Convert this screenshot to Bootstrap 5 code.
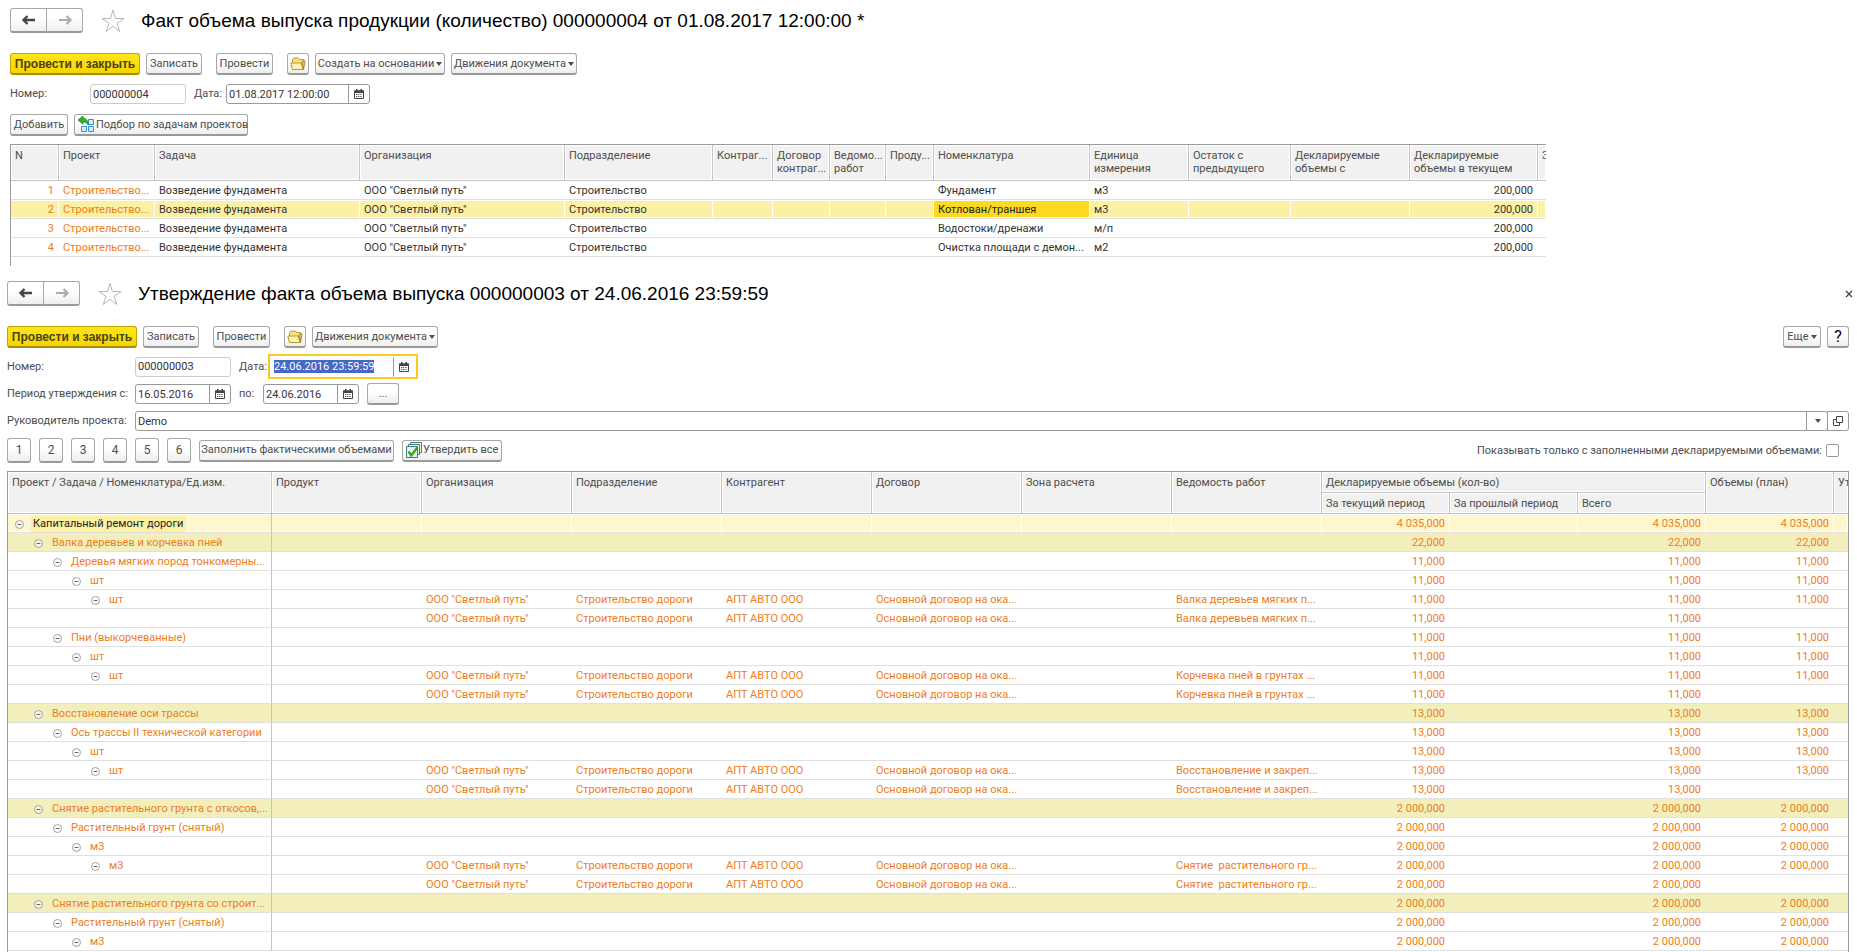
<!DOCTYPE html>
<html lang="ru">
<head>
<meta charset="utf-8">
<meta name="viewport" content="width=device-width, initial-scale=1">
<title>Утверждение факта объема выпуска</title>
<link href="https://cdn.jsdelivr.net/npm/bootstrap@5.3.0/dist/css/bootstrap.min.css" rel="stylesheet">
<style>
  html, body { height: 100%; }
  body { font: 11px/14px Roboto, "Liberation Sans", sans-serif; color: #4d4d4d; background: #fff; overflow: hidden; }
  svg { display: block; flex: none; }
  h1 { font: 19px/24px "Liberation Sans", Arial, sans-serif; color: #000; margin: 0; white-space: nowrap; }
  .btn { --bs-btn-padding-x: 3px; --bs-btn-padding-y: 0; --bs-btn-font-size: 11px; --bs-btn-line-height: 14px; --bs-btn-border-radius: 3px;
    --bs-btn-color: #4d4d4d; --bs-btn-border-color: #a8a8a8; --bs-btn-hover-color: #222; --bs-btn-hover-border-color: #888;
    height: 22px; border-bottom: 2px solid #999; background: linear-gradient(#fff 40%, #eee); white-space: nowrap; display: inline-flex; align-items: center; justify-content: center; }
  .btn.main { --bs-btn-border-color: #c2a500; --bs-btn-color: #4a4417; background: linear-gradient(#ffe61a, #f5d500); border-bottom-color: #a88f00; font: bold 12px/14px "Liberation Sans", sans-serif; width: 130px; }
  .btn.dropdown-toggle::after { border-width: 4px 3px 0; margin-left: 2px; vertical-align: 0; }
  .w-save { width: 56px; } .w-post { width: 57px; } .w-sq { width: 22px; }
  .w-base { width: 130px; } .w-moves { width: 126px; } .w-add { width: 58px; } .w-pick { width: 174px; }
  .w-fill { width: 195px; } .w-approve { width: 100px; } .w-more { width: 38px; } .w-dots { width: 32px; }
  .btn.w-pick, .btn.w-approve { gap: 1px; justify-content: flex-start; }
  .btn.num { width: 24px; height: 25px; font-size: 12px; }
  .history .btn { width: 37px; height: 25px; }
  .bar { gap: 6px; }
  .after-save { margin-left: 8px; }
  .star { margin: 0 16px 0 18px; }
  .form-control { font: 11px/14px Roboto, sans-serif; color: #333; padding: 0 2px; height: 20px; min-height: 20px; border-color: #999; border-radius: 3px; }
  .form-control[readonly] { border-color: #ccc; }
  .w-number { width: 96px; }
  .input-group { height: 20px; flex-wrap: nowrap; }
  .input-group .btn { height: 20px; width: 22px; padding: 0; background: #fff; border: 1px solid #999; }
  .g-date { width: 144px; } .g-day { width: 96px; }
  .focused { height: 25px; width: 150px; border: 2px solid #fbc91f; padding: 1px; background: #fff; align-items: center; }
  .focused .form-control, .focused .btn { border-color: transparent; box-shadow: none; }
  .focused .btn { border-left-color: #999; }
  .form-control::selection { background: #4667c5; color: #fff; }
  .lbl-a { width: 80px; } .lbl-b { width: 128px; } .lbl-to { width: 24px; } .lbl-date { width: 29px; }
  .form-check-input.flag { width: 13px; height: 13px; margin: 0 10px 0 0; border: 1px solid #999; border-radius: 2px; }
  .panel-a { padding: 8px 8px 0 10px; }
  .panel-b { padding: 15px 8px 0 7px; min-height: 0; }
  .gap-t4 { margin-top: 4px; } .gap-t6 { margin-top: 6px; } .gap-t7 { margin-top: 7px; } .gap-t9 { margin-top: 9px; } .gap-t10 { margin-top: 10px; } .gap-t20 { margin-top: 20px; }
  .frame { border: 1px solid #999; border-right: 0; border-bottom: 0; overflow: hidden; margin-top: 8px; }
  .frame-a { max-width: 1536px; height: 122px; }
  .frame-b { border-right: 1px solid #999; }
  .grid { table-layout: fixed; width: 100%; border-collapse: separate; border-spacing: 0; margin: 0; }
  .grid th { font-weight: 400; vertical-align: top; background: #f1f1f1; border-right: 1px solid #c4c4c4; border-bottom: 1px solid #c4c4c4; box-shadow: inset 0 0 0 1px #fff; padding: 4px 0 0 4px; line-height: 13px; overflow: hidden; white-space: nowrap; }
  .grid th:last-child { border-right: 0; }
  .grid th.sub-last { border-right: 1px solid #c4c4c4; }
  .frame-a th { height: 36px; }
  .frame-b th { height: 21px; }
  .grid td { height: 19px; padding: 2px 5px 0 4px; line-height: 16px; border-bottom: 1px solid #e0e0e0; overflow: hidden; white-space: nowrap; color: #333; }
  .grid .num-cell { text-align: right; }
  .grid .orange, .tree td { color: #ee7d1b; }
  .grid tr.current td { background: #fcf0a4; border-right: 1px solid #fff; box-shadow: inset 0 1px #fff, inset 0 -1px #fff; }
  .grid tr.current td.cell-on { background: #fcda20; color: #222; }
  .grid tr.current .num-cell { padding-right: 4px; }
  .tree td:first-child { border-right: 1px solid #c4c4c4; padding-left: calc(7px + 19px * var(--level, 0)); padding-right: 2px; }
  .tree tr.root td { background: #fdf6cf; border-right: 1px solid #fff; box-shadow: inset 0 1px #fff, inset 0 -1px #fff; }
  .tree tr.root td:first-child { border-right-color: #c4c4c4; }
  .tree tr.root .num-cell { padding-right: 4px; }
  .tree tr.task td { background: #f3efbd; }
  .lv1 { --level: 1; } .lv2 { --level: 2; } .lv3 { --level: 3; } .lv4 { --level: 4; }
  .node { gap: 7px; }
  .node span { padding: 0 2px; }
  .root .node span { background: #fcf0a4; color: #222; padding-right: 3px; }
  .close-x { color: #4d4d4d; background: none; border: 0; padding: 0; margin-right: -4px; }
</style>
</head>
<body class="d-flex flex-column">

<svg width="0" height="0" class="position-absolute" aria-hidden="true">
  <symbol id="i-back" viewBox="0 0 16 12"><path d="M6.500 2 2.500 6l4 4M3 6h11" fill="none" stroke="#444" stroke-width="2.400"/></symbol>
  <symbol id="i-next" viewBox="0 0 16 12"><path d="M9.500 2l4 4-4 4M13 6H2" fill="none" stroke="#aaa" stroke-width="2.200"/></symbol>
  <symbol id="i-star" viewBox="0 0 24 24"><path d="M12 1l2.400 8.500H23l-7 4.800 2.800 8.200L12 17.200l-6.800 5.300L8 14.300 1 9.500h8.600z" fill="#fff" stroke="#b4b9c0"/></symbol>
  <symbol id="i-folder" viewBox="0 0 16 14"><path d="M2.500 6V2.500L4 1h4l1.500 1.500h4V12" fill="#f7e08a" stroke="#b9982c"/><path d="M2.500 12.500.8 6h10.400l2 6.500z" fill="#fdf3b8" stroke="#b9982c"/><path d="M11.500 5.500 14 3l1 1.500-1.500 8z" fill="#d9b648" stroke="#9c7c1c" stroke-width=".8"/></symbol>
  <symbol id="i-cal" viewBox="0 0 10 10"><path d="M.5 2h9v7.500h-9z" fill="#fff" stroke="#444"/><path d="M0 1.500h10V4H0zM2 0h1.500v2H2zM6.500 0H8v2H6.500z" fill="#444"/><path d="M2 5.500h6M2 7.500h6" stroke="#444" stroke-dasharray="1.200 1"/></symbol>
  <symbol id="i-pick" viewBox="0 0 17 17"><g fill="#d5ecfb" stroke="#3592dc"><path d="M10.500 3.500h5v5h-5zM3.500 10.500h5v5h-5zM10.500 10.500h5v5h-5z"/></g><path d="M0 4 5 0v2.200c3 0 5 2 5.500 7C8.500 6.500 7 6 5 6v2.200z" fill="#2bb32b" stroke="#14801a" stroke-width=".7"/></symbol>
  <symbol id="i-ok" viewBox="0 0 16 16"><g fill="#e9f3ee" stroke="#4a7a80"><path d="M4.500.5h11v10h-11z"/><path d="M2.500 2.500h11v10h-11z"/><path d="M.5 4.500h11v11H.5z"/></g><path d="M2.500 9.500l2.800 4 6-8" fill="none" stroke="#35a81e" stroke-width="2.400"/></symbol>
  <symbol id="i-open" viewBox="0 0 10 10"><path d="M3.500.5h6v6h-6zM3 3.500H.5v6h6V7" fill="none" stroke="#444"/></symbol>
  <symbol id="i-minus" viewBox="0 0 9 9"><circle cx="4.500" cy="4.500" r="4" fill="#fff" fill-opacity=".6" stroke="#a0a0a0"/><path d="M2.500 4.500h4" stroke="#666"/></symbol>
  <symbol id="i-x" viewBox="0 0 8 8"><path d="M1 1l6 6M7 1 1 7" stroke="#444" stroke-width="1.300"/></symbol>
</svg>

<section class="panel-a flex-shrink-0">
  <div class="d-flex align-items-center">
    <div class="btn-group history" role="group">
      <button type="button" class="btn" aria-label="Назад"><svg width="16" height="12"><use href="#i-back"/></svg></button>
      <button type="button" class="btn" aria-label="Вперед"><svg width="16" height="12"><use href="#i-next"/></svg></button>
    </div>
    <svg class="star" width="24" height="24"><use href="#i-star"/></svg>
    <h1>Факт объема выпуска продукции (количество) 000000004 от 01.08.2017 12:00:00 *</h1>
  </div>
  <div class="d-flex bar gap-t20">
    <button type="button" class="btn main">Провести и закрыть</button>
    <button type="button" class="btn w-save">Записать</button>
    <button type="button" class="btn w-post after-save">Провести</button>
    <button type="button" class="btn w-sq after-save" aria-label="Открыть папку"><svg width="16" height="14"><use href="#i-folder"/></svg></button>
    <button type="button" class="btn w-base dropdown-toggle">Создать на основании</button>
    <button type="button" class="btn w-moves dropdown-toggle">Движения документа</button>
  </div>
  <div class="d-flex align-items-center gap-t9">
    <label class="lbl-a" for="numA">Номер:</label>
    <input id="numA" class="form-control w-number" readonly value="000000004">
    <label class="ms-2 me-1" for="dateA">Дата:</label>
    <div class="input-group g-date">
      <input id="dateA" class="form-control" value="01.08.2017 12:00:00">
      <button type="button" class="btn" aria-label="Выбрать дату"><svg width="10" height="10"><use href="#i-cal"/></svg></button>
    </div>
  </div>
  <div class="d-flex bar gap-t10">
    <button type="button" class="btn w-add">Добавить</button>
    <button type="button" class="btn w-pick"><svg width="17" height="17"><use href="#i-pick"/></svg>Подбор по задачам проектов</button>
  </div>
  <div class="frame frame-a">
    <table class="grid">
      <colgroup><col width="48"><col width="96"><col width="205"><col width="205"><col width="148"><col width="60"><col width="57"><col width="56"><col width="48"><col width="156"><col width="99"><col width="102"><col width="119"><col width="128"><col></colgroup>
      <thead><tr><th>N</th><th>Проект</th><th>Задача</th><th>Организация</th><th>Подразделение</th><th>Контраг...</th><th>Договор<br>контраг...</th><th>Ведомо...<br>работ</th><th>Проду...</th><th>Номенклатура</th><th>Единица<br>измерения</th><th>Остаток с<br>предыдущего</th><th>Декларируемые<br>объемы с</th><th>Декларируемые<br>объемы в текущем</th><th>З</th></tr></thead>
      <tbody id="output"></tbody>
    </table>
  </div>
</section>

<section class="panel-b d-flex flex-column flex-grow-1">
  <div class="d-flex align-items-center">
    <div class="btn-group history" role="group">
      <button type="button" class="btn" aria-label="Назад"><svg width="16" height="12"><use href="#i-back"/></svg></button>
      <button type="button" class="btn" aria-label="Вперед"><svg width="16" height="12"><use href="#i-next"/></svg></button>
    </div>
    <svg class="star" width="24" height="24"><use href="#i-star"/></svg>
    <h1>Утверждение факта объема выпуска 000000003 от 24.06.2016 23:59:59</h1>
    <button type="button" class="close-x ms-auto" aria-label="Закрыть"><svg width="8" height="8"><use href="#i-x"/></svg></button>
  </div>
  <div class="d-flex bar gap-t20">
    <button type="button" class="btn main">Провести и закрыть</button>
    <button type="button" class="btn w-save">Записать</button>
    <button type="button" class="btn w-post after-save">Провести</button>
    <button type="button" class="btn w-sq after-save" aria-label="Открыть папку"><svg width="16" height="14"><use href="#i-folder"/></svg></button>
    <button type="button" class="btn w-moves dropdown-toggle">Движения документа</button>
    <button type="button" class="btn w-more dropdown-toggle ms-auto">Еще</button>
    <button type="button" class="btn w-sq fs-6 text-black">?</button>
  </div>
  <div class="d-flex align-items-center gap-t6">
    <label class="lbl-b" for="numB">Номер:</label>
    <input id="numB" class="form-control w-number" readonly value="000000003">
    <label class="ms-2 lbl-date" for="dateB">Дата:</label>
    <div class="input-group focused">
      <input id="dateB" class="form-control" value="24.06.2016 23:59:59">
      <button type="button" class="btn" aria-label="Выбрать дату"><svg width="10" height="10"><use href="#i-cal"/></svg></button>
    </div>
  </div>
  <div class="d-flex align-items-center gap-t4">
    <label class="lbl-b" for="from">Период утверждения с:</label>
    <div class="input-group g-day">
      <input id="from" class="form-control" value="16.05.2016">
      <button type="button" class="btn" aria-label="Выбрать дату"><svg width="10" height="10"><use href="#i-cal"/></svg></button>
    </div>
    <label class="ms-2 lbl-to" for="to">по:</label>
    <div class="input-group g-day">
      <input id="to" class="form-control" value="24.06.2016">
      <button type="button" class="btn" aria-label="Выбрать дату"><svg width="10" height="10"><use href="#i-cal"/></svg></button>
    </div>
    <button type="button" class="btn w-dots ms-2">...</button>
  </div>
  <div class="d-flex align-items-center gap-t6">
    <label class="lbl-b flex-shrink-0" for="head">Руководитель проекта:</label>
    <div class="input-group">
      <input id="head" class="form-control" value="Demo">
      <button type="button" class="btn dropdown-toggle" aria-label="Список"></button>
      <button type="button" class="btn" aria-label="Открыть"><svg width="10" height="10"><use href="#i-open"/></svg></button>
    </div>
  </div>
  <div class="d-flex align-items-center gap-t7">
    <div class="d-flex gap-2">
      <button type="button" class="btn num">1</button><button type="button" class="btn num">2</button><button type="button" class="btn num">3</button><button type="button" class="btn num">4</button><button type="button" class="btn num">5</button><button type="button" class="btn num">6</button>
    </div>
    <button type="button" class="btn w-fill ms-2">Заполнить фактическими объемами</button>
    <button type="button" class="btn w-approve bar-end ms-2"><svg width="16" height="16"><use href="#i-ok"/></svg>Утвердить все</button>
    <label class="ms-auto me-1" for="filled">Показывать только с заполненными декларируемыми объемами:</label>
    <input id="filled" type="checkbox" class="form-check-input flag">
  </div>
  <div class="frame frame-b flex-grow-1">
    <table class="grid tree">
      <colgroup><col width="264"><col width="150"><col width="150"><col width="150"><col width="150"><col width="150"><col width="150"><col width="150"><col width="128"><col width="128"><col width="128"><col width="128"><col></colgroup>
      <thead>
        <tr><th rowspan="2">Проект / Задача / Номенклатура/Ед.изм.</th><th rowspan="2">Продукт</th><th rowspan="2">Организация</th><th rowspan="2">Подразделение</th><th rowspan="2">Контрагент</th><th rowspan="2">Договор</th><th rowspan="2">Зона расчета</th><th rowspan="2">Ведомость работ</th><th colspan="3">Декларируемые объемы (кол-во)</th><th rowspan="2">Объемы (план)</th><th rowspan="2">Ут</th></tr>
        <tr><th>За текущий период</th><th>За прошлый период</th><th class="sub-last">Всего</th></tr>
      </thead>
      <tbody id="approval"></tbody>
    </table>
  </div>
</section>

<script src="https://cdn.jsdelivr.net/npm/bootstrap@5.3.0/dist/js/bootstrap.bundle.min.js"></script>
<script>
  const output = [['Фундамент', 'м3'], ['Котлован/траншея', 'м3'], ['Водостоки/дренажи', 'м/п'], ['Очистка площади с демон...', 'м2']];
  document.getElementById('output').innerHTML = output.map(([item, unit], i) => {
    const on = i === 1;
    return `<tr class="${on ? 'current' : ''}"><td class="num-cell orange">${i + 1}</td><td class="orange">Строительство...</td><td>Возведение фундамента</td><td>ООО "Светлый путь"</td><td>Строительство</td><td></td><td></td><td></td><td></td><td class="${on ? 'cell-on' : ''}">${item}</td><td>${unit}</td><td></td><td></td><td class="num-cell">200,000</td><td></td></tr>`;
  }).join('');

  // level, name, amount, work sheet (leaf rows only)
  const rows = [
    [0, 'Капитальный ремонт дороги', '4 035,000'],
    [1, 'Валка деревьев и корчевка пней', '22,000'],
    [2, 'Деревья мягких пород тонкомерны...', '11,000'],
    [3, 'шт', '11,000'],
    [4, 'шт', '11,000', 'Валка деревьев мягких п...'],
    [5, '', '11,000', 'Валка деревьев мягких п...'],
    [2, 'Пни (выкорчеванные)', '11,000'],
    [3, 'шт', '11,000'],
    [4, 'шт', '11,000', 'Корчевка пней в грунтах ...'],
    [5, '', '11,000', 'Корчевка пней в грунтах ...'],
    [1, 'Восстановление оси трассы', '13,000'],
    [2, 'Ось трассы II технической категории', '13,000'],
    [3, 'шт', '13,000'],
    [4, 'шт', '13,000', 'Восстановление и закреп...'],
    [5, '', '13,000', 'Восстановление и закреп...'],
    [1, 'Снятие растительного грунта с откосов,...', '2 000,000'],
    [2, 'Растительный грунт (снятый)', '2 000,000'],
    [3, 'м3', '2 000,000'],
    [4, 'м3', '2 000,000', 'Снятие&nbsp; растительного гр...'],
    [5, '', '2 000,000', 'Снятие&nbsp; растительного гр...'],
    [1, 'Снятие растительного грунта со строит...', '2 000,000'],
    [2, 'Растительный грунт (снятый)', '2 000,000'],
    [3, 'м3', '2 000,000']
  ];
  document.getElementById('approval').innerHTML = rows.map(([level, name, amount, sheet]) => {
    const kind = level === 0 ? 'root' : level === 1 ? 'task' : '';
    const node = name ? `<div class="node d-flex align-items-center"><svg width="9" height="9"><use href="#i-minus"/></svg><span>${name}</span></div>` : '';
    const leaf = sheet ? ['ООО "Светлый путь"', 'Строительство дороги', 'АПТ АВТО ООО', 'Основной договор на ока...', '', sheet] : ['', '', '', '', '', ''];
    return `<tr class="${kind}"><td class="lv${level}">${node}</td><td></td>${leaf.map(t => `<td>${t}</td>`).join('')}<td class="num-cell">${amount}</td><td></td><td class="num-cell">${amount}</td><td class="num-cell">${level === 5 ? '' : amount}</td><td></td></tr>`;
  }).join('');

  const date = document.getElementById('dateB');
  date.focus();
  date.select();
</script>
</body>
</html>
